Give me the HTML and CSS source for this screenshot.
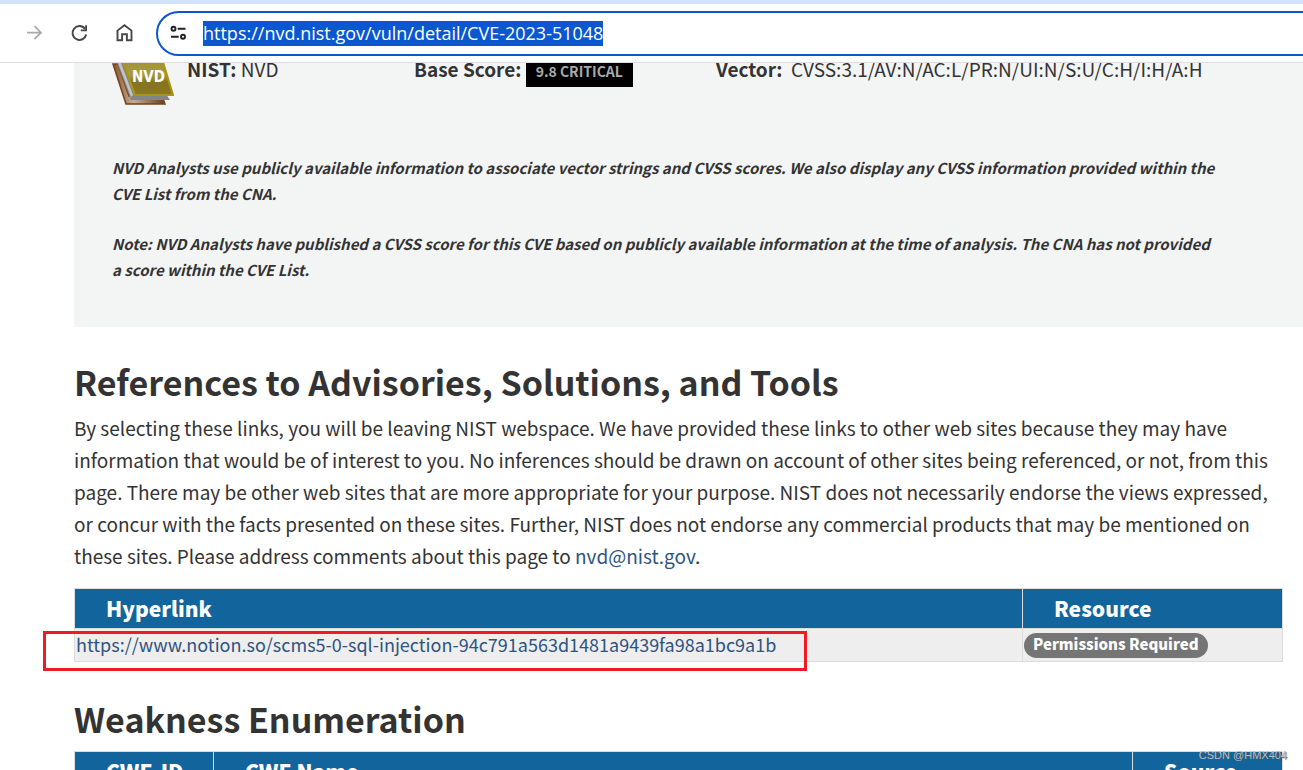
FILE: index.html
```html
<!DOCTYPE html>
<html lang="en">
<head>
<meta charset="utf-8">
<title>NVD - CVE-2023-51048</title>
<link rel="stylesheet" href="styles.css">
</head>
<body>
<header class="browser">
  <div class="tabstrip"></div>
  <div class="toolbar">
    <nav class="nav">
      <button class="nav-button nav-button-off" aria-label="Forward">
        <svg width="20" height="20" viewBox="0 0 20 20"><path d="M3 9.700H17M10.500 3.200L17 9.700L10.500 16.200" fill="none" stroke="currentColor" stroke-width="1.800"/></svg>
      </button>
      <button class="nav-button" aria-label="Reload">
        <svg width="20" height="20" viewBox="0 0 20 20"><path d="M17.200 11.500A6.900 6.900 0 1 1 16 5.900" fill="none" stroke="currentColor" stroke-width="2"/><path d="M18 2.200V8.300H11.800V6.400H16.200V2.200Z" fill="currentColor"/></svg>
      </button>
      <button class="nav-button" aria-label="Home">
        <svg width="20" height="20" viewBox="0 0 20 20"><path d="M3.500 17.200V7.600L10.500 2.200L17.500 7.600V17.200H12.900V11.300H8.100V17.200Z" fill="none" stroke="currentColor" stroke-width="1.900"/></svg>
      </button>
    </nav>
    <div class="omnibox">
      <button class="site-info" aria-label="View site information">
        <svg width="20" height="20" viewBox="0 0 20 20" fill="none" stroke="currentColor" stroke-width="1.900"><circle cx="5.500" cy="5.700" r="2"/><path d="M9.700 5.700H17.500M3 13.800H10.700"/><circle cx="15" cy="13.800" r="2"/></svg>
      </button>
      <input class="address" type="text" aria-label="Address" value="https://nvd.nist.gov/vuln/detail/CVE-2023-51048">
    </div>
  </div>
</header>
<main class="page">
  <section class="score">
    <div class="metrics">
      <div class="source">
        <svg class="book" width="62" height="43" viewBox="0 0 62 43" aria-label="NVD">
          <defs><linearGradient id="cover" x1="0" y1="0" x2="0" y2="1"><stop offset="0" stop-color="#a3933a"/><stop offset=".4" stop-color="#a89940"/><stop offset=".6" stop-color="#85741d"/><stop offset="1" stop-color="#8b7922"/></linearGradient>
          <linearGradient id="base" x1="0" y1="0" x2="1" y2="0"><stop offset="0" stop-color="#8a552c"/><stop offset=".4" stop-color="#c4ad96"/><stop offset="1" stop-color="#6f3b12"/></linearGradient></defs>
          <path d="M1 1L14 41H53L50 33H17L6 1Z" fill="url(#base)" stroke="#75421b" stroke-width="1.500"/>
          <path d="M5 0L19 37H58L54 31H22L12 0Z" fill="#858585"/>
          <path d="M6 0L19 34L21 32L9 0Z" fill="#c3c3c3"/>
          <path d="M11 -1H51L61 32H23Z" fill="url(#cover)" stroke="#a99713" stroke-width="2"/>
          <text class="book-text" x="20" y="19">NVD</text>
        </svg>
        <div><strong>NIST:</strong> NVD</div>
      </div>
      <div class="base-score"><strong>Base Score:</strong> <a class="severity" href="#">9.8 CRITICAL</a></div>
      <div class="vector"><strong>Vector:</strong>&nbsp; CVSS:3.1/AV:N/AC:L/PR:N/UI:N/S:U/C:H/I:H/A:H</div>
    </div>
    <div class="notes">
      <p>NVD Analysts use publicly available information to associate vector strings and CVSS scores. We also display any CVSS information provided within the CVE List from the CNA.</p>
      <p>Note: NVD Analysts have published a CVSS score for this CVE based on publicly available information at the time of analysis. The CNA has not provided a score within the CVE List.</p>
    </div>
  </section>
  <section class="block">
    <h2>References to Advisories, Solutions, and Tools</h2>
    <p class="intro">By selecting these links, you will be leaving NIST webspace. We have provided these links to other web sites because they may have information that would be of interest to you. No inferences should be drawn on account of other sites being referenced, or not, from this page. There may be other web sites that are more appropriate for your purpose. NIST does not necessarily endorse the views expressed, or concur with the facts presented on these sites. Further, NIST does not endorse any commercial products that may be mentioned on these sites. Please address comments about this page to <a href="#">nvd@nist.gov</a>.</p>
    <div class="marked">
      <table class="grid">
        <colgroup><col><col class="col-resource"></colgroup>
        <thead><tr><th>Hyperlink</th><th>Resource</th></tr></thead>
        <tbody><tr><td><a href="#">https://www.notion.so/scms5-0-sql-injection-94c791a563d1481a9439fa98a1bc9a1b</a></td><td><span class="badge">Permissions Required</span></td></tr></tbody>
      </table>
      <div class="highlight"></div>
    </div>
  </section>
  <section class="block">
    <h2>Weakness Enumeration</h2>
    <table class="grid">
      <colgroup><col class="col-id"><col><col class="col-source"></colgroup>
      <thead><tr><th>CWE-ID</th><th>CWE Name</th><th>Source</th></tr></thead>
    </table>
  </section>
</main>
<div class="watermark">CSDN @HMX404</div>
</body>
</html>
```
FILE: styles.css
```css
* { box-sizing: border-box; }
body {
  margin: 0;
  height: 100vh;
  display: flex;
  flex-direction: column;
  overflow: hidden;
  background: #fff;
  color: #333;
  font: 400 19px/32px "Noto Sans CJK SC", "Open Sans", sans-serif;
}
strong { font-weight: 700; }
a { color: #2e5481; text-decoration: none; }
.browser { flex: none; border-bottom: 1px solid #dedfe0; background: #fff; }
.tabstrip { height: 4px; background: #d3e3fd; }
.toolbar { display: flex; align-items: center; height: 58px; padding-left: 22px; overflow: hidden; }
.nav { display: flex; gap: 21px; }
.nav-button, .site-info { display: flex; width: 24px; padding: 2px; border: 0; background: none; color: #474747; }
.nav-button-off { color: #ababab; }
.omnibox {
  flex: 1;
  display: flex;
  align-items: center;
  height: 45px;
  margin: 0 -30px 0 20px;
  padding-left: 8px;
  border: 2px solid #0b57d0;
  border-radius: 23px;
}
.site-info { color: #222; }
.address {
  field-sizing: content;
  height: 25px;
  margin-left: 13px;
  padding: 0;
  border: 0;
  background: #0b57d0;
  color: #fff;
  font: 18px/25px "Open Sans", sans-serif;
}
.page { flex: 1; min-height: 0; overflow: hidden; padding-left: 74px; }
.score { padding: 0 38px 44px; background: #f3f5f5; }
.metrics { display: flex; height: 92px; white-space: nowrap; line-height: 12px; }
.source { display: flex; gap: 13px; width: 302px; }
.book { flex: none; }
.book-text { font: 900 15px "DejaVu Sans Condensed", sans-serif; font-stretch: condensed; fill: #fff; }
.base-score { width: 302px; }
.severity { padding: 4px 10px 6px; background: #000; color: #aaa; font-size: 14px; font-weight: 700; }
.notes { max-width: 1106px; font-size: 15px; font-weight: 700; font-style: italic; line-height: 26px; }
.notes p { margin: 0 0 24px; }
.notes p:last-child { margin: 0; }
.block { padding-right: 20px; }
h2 { margin: 0; padding-top: 30px; font-size: 34px; font-weight: 700; line-height: 50px; }
.intro { margin: 5px 0 16px; }
.marked { position: relative; padding-bottom: 2px; }
.grid { width: 100%; border-collapse: collapse; table-layout: fixed; }
h2 + .grid { margin-top: 7px; }
.grid th, .grid td { border: 1px solid #dcdcdc; text-align: left; }
.grid th { height: 40px; padding: 0 31px; background: #12659c; color: #fff; font-size: 21px; font-weight: 900; line-height: 39px; white-space: nowrap; }
.grid td { height: 33px; padding: 0 1px 3px; background: #eee; font-size: 18px; line-height: 28px; }
.col-resource { width: 260px; }
.col-id { width: 139px; }
.col-source { width: 150px; }
.badge { display: inline-block; padding: 0 9px 3px; border-radius: 13px; background: #757575; color: #fff; font-size: 15px; font-weight: 900; line-height: 22px; vertical-align: bottom; }
.highlight { position: absolute; top: 43px; left: -31px; width: 764px; height: 40px; border: 3px solid #ed1c24; pointer-events: none; }
.watermark { position: absolute; right: 16px; bottom: 5px; color: #b5bfc8; font: 11px/20px "Liberation Sans", sans-serif; text-shadow: 1px 1px 1px #555; }
```
